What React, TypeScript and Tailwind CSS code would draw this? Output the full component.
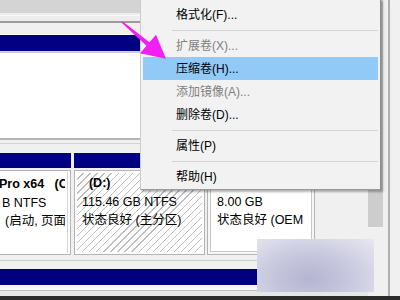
type MenuEntry = { label?: string; sep?: boolean; disabled?: boolean; active?: boolean };

const menu: MenuEntry[] = [
  { label: "格式化(F)..." },
  { sep: true },
  { label: "扩展卷(X)...", disabled: true },
  { label: "压缩卷(H)...", active: true },
  { label: "添加镜像(A)...", disabled: true },
  { label: "删除卷(D)..." },
  { sep: true },
  { label: "属性(P)" },
  { sep: true },
  { label: "帮助(H)" },
];

function ContextMenu() {
  return (
    <div className="absolute left-[140px] top-[-1px] w-[241px] border border-[#cccccc] border-r-[#8c8c8c] border-b-[#9a9a9a] bg-[#f2f2f2] px-[2px] pt-[3px] pb-[1px] text-[12px] shadow-[2px_2px_2px_rgba(0,0,0,0.3)]">
      {menu.map((m, i) =>
        m.sep ? (
          <div key={i} className="flex h-[8px] items-center pl-[29px]">
            <div className="h-px w-full bg-[#d4d4d4]" />
          </div>
        ) : (
          <div
            key={i}
            className={
              "flex h-[23px] items-center pl-[33px] " +
              (m.active ? "bg-[#91c9f7] " : "") +
              (m.disabled ? "text-[#808080]" : "text-black")
            }
          >
            {m.label}
          </div>
        )
      )}
    </div>
  );
}

function Arrow() {
  return (
    <svg className="pointer-events-none absolute left-0 top-0" width="400" height="300">
      <polygon
        fill="#f21ff2"
        points="122.4,21.2 149.5,42.3 156,34.8 166,58.8 140,53.2 146.5,45.7 121.4,22.6"
      />
    </svg>
  );
}

export default function App() {
  return (
    <div className="relative flex h-[300px] w-[400px] flex-col overflow-hidden bg-[#f0f0f0] font-[family-name:'Liberation_Sans','Noto_Sans_CJK_SC',sans-serif] text-black">
      <div className="flex h-[296px]">
        {/* disk area */}
        <div className="flex w-[368px] flex-col">
          <div className="h-[13px] bg-[#d4d4d4]" />
          <div className="h-[8px] bg-[#ededed] pt-[2px]">
            <div className="h-px bg-[#fafafa]" />
          </div>
          <div className="h-[2px] bg-[#9c9c9c]" />
          <div className="h-[12px] border-b border-white bg-[#f0f0f0]" />
          <div className="h-[16px] bg-[#000080]" />
          <div className="h-[2px] bg-[#cfcfcf]" />
          <div className="h-[85px] bg-white" />
          <div className="h-[2px] bg-[#b4b4b4]" />
          <div className="h-[13px] pt-[3px]">
            <div className="h-px bg-[#d4d4d4]" />
          </div>

          {/* partitions */}
          <div className="flex h-[103px] text-[12.5px] leading-[18.5px]">
            <div className="flex w-[71px] flex-col pb-[1px]">
              <div className="h-[15px] bg-[#000080]" />
              <div className="mt-[2px] flex-1 border-y border-r border-[#b4b4b4] bg-white py-px pr-[2px]">
                <div className="h-full overflow-hidden whitespace-pre border-r border-[#d6d6d6] pr-[2px] pt-[3px]">
                  <div className="-ml-[1px] overflow-hidden font-bold">Pro x64   (C:)</div>
                  <div className="ml-[2px]">B NTFS</div>
                  <div className="ml-[5px] overflow-hidden">(启动, 页面文件, 故障转储, 主分区)</div>
                </div>
              </div>
            </div>
            <div className="w-[3px]" />
            <div className="flex w-[131px] flex-col pb-[1px]">
              <div className="h-[15px] bg-[#000080]" />
              <div className="mt-[2px] flex-1 border border-[#b4b4b4] bg-white p-[2px]">
                <div className="h-full overflow-hidden whitespace-pre bg-[image:repeating-linear-gradient(135deg,#ffffff_0px,#ffffff_4px,#bdbdbd_4px,#bdbdbd_5px)] pl-[5px] pt-px">
                  <div className="font-bold">  (D:)</div>
                  <div>115.46 GB NTFS</div>
                  <div>状态良好 (主分区)</div>
                </div>
              </div>
            </div>
            <div className="w-[2px]" />
            <div className="flex w-[108px] flex-col pb-[1px]">
              <div className="h-[15px] bg-[#000080]" />
              <div className="mt-[2px] flex-1 border border-[#b4b4b4] bg-[#f6f6f6] p-[2px]">
                <div className="h-full overflow-hidden whitespace-pre border border-[#c8c8c8] bg-white pl-[6px] pr-[4px] pt-0">
                  <div className="font-bold"> </div>
                  <div>8.00 GB</div>
                  <div className="overflow-hidden">状态良好 (OEM 分区)</div>
                </div>
              </div>
            </div>
            <div className="flex-1" />
          </div>

          <div className="h-[13px] pt-[4px]">
            <div className="h-px bg-[#cdcdcd]" />
          </div>
          <div className="h-[16px] bg-[#000080]" />
          <div className="h-[5px] bg-[#f7f7f7]" />
          <div className="h-px bg-[#bdbdbd]" />
          <div className="h-[5px] bg-[#e6e6e6]" />
        </div>

        {/* scrollbar */}
        <div className="w-[16px]">
          <div className="h-[227px] w-[15px] bg-[#cdcdcd]" />
        </div>
        <div className="w-[16px] pl-[4px]">
          <div className="h-full w-[2px] bg-[#b0b0b0]" />
        </div>
      </div>
      <div className="h-[4px] bg-[#2b2b2b]" />

      <ContextMenu />

      {/* blurred watermark patch */}
      <div className="absolute left-[257px] top-[239px] h-[53px] w-[117px] bg-[radial-gradient(ellipse_at_45%_75%,#b5b5d3_0%,#c5c5dd_40%,#e8e8f0_100%)]" />

      <Arrow />
    </div>
  );
}
